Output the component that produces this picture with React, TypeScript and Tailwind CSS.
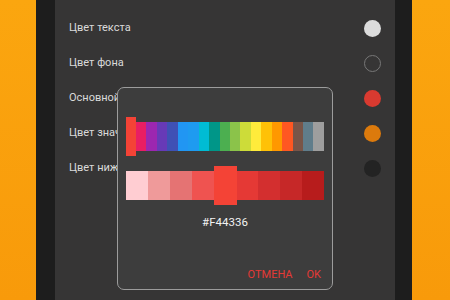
import React from 'react';

const FONT = { fontFamily: 'Roboto, "Noto Sans", sans-serif' };

const rows = [
  { label: 'Цвет текста', swatch: 'bg-[#dcdcdc]' },
  { label: 'Цвет фона', swatch: 'border border-[#777] bg-transparent' },
  { label: 'Основной цвет', swatch: 'bg-[#d93a30]' },
  { label: 'Цвет значков', swatch: 'bg-[#dc7a0c]' },
  { label: 'Цвет нижней панели', swatch: 'bg-[#232323]' },
];

const hues = [
  '#F44336', '#E91E63', '#9C27B0', '#673AB7', '#3F51B5', '#2196F3', '#1E9BF0',
  '#00BCD4', '#009688', '#4CAF50', '#8BC34A', '#CDDC39', '#FFEB3B', '#FFC107',
  '#FF9800', '#FF5722', '#795548', '#607D8B', '#9E9E9E',
];

const shades = [
  '#FFCDD2', '#EF9A9A', '#E57373', '#EF5350', '#F44336',
  '#E53935', '#D32F2F', '#C62828', '#B71C1C',
];

const ColorDialog = () => {
  return (
    <div className="absolute left-[62px] top-[87px] w-[216px] h-[203px] rounded-[7px] border-[1.5px] border-[#9c9c9c] bg-[#3d3d3d] flex flex-col">
      {/* оттенки */}
      <div className="mt-[28px] ml-[8px] mr-[8px] flex items-center h-[40px]">
        {hues.map((c, i) => (
          <div
            key={c + i}
            className={i === 0 ? 'w-[10px] h-[39px]' : 'flex-1 h-[29px]'}
            style={{ backgroundColor: c }}
          />
        ))}
      </div>
      {/* насыщенность */}
      <div className="mt-[10px] ml-[8px] mr-[8px] flex items-center h-[39px]">
        {shades.map((c, i) => (
          <div
            key={c}
            className={i === 4 ? 'w-[23px] h-[39px]' : 'flex-1 h-[29px]'}
            style={{ backgroundColor: c }}
          />
        ))}
      </div>
      <div className="mt-[10px] text-center text-[11.5px] text-[#f2f2f2] leading-[14px]">#F44336</div>
      <div className="mt-auto mb-[7px] flex justify-end items-center gap-[14px] pr-[11px] h-[14px] text-[11px] text-[#e53935] leading-[14px]">
        <span>ОТМЕНА</span>
        <span>OK</span>
      </div>
    </div>
  );
};

const App = () => {
  return (
    <div className="w-[450px] h-[300px] flex overflow-hidden" style={FONT}>
      <div className="w-[36px] bg-gradient-to-b from-[#fba60f] to-[#f89a0a]" />
      <div className="w-[19px] bg-[#1d1d1d]" />
      <div className="relative w-[340px] bg-[#363535] pt-[11px]">
        {rows.map((r) => (
          <div key={r.label} className="h-[35px] flex items-center justify-between pl-[14px] pr-[14px]">
            <span className="text-[11px] text-[#dadada]">{r.label}</span>
            <span className={`w-[17px] h-[17px] rounded-full ${r.swatch}`} />
          </div>
        ))}
        <ColorDialog />
      </div>
      <div className="w-[17px] bg-[#1d1d1d]" />
      <div className="flex-1 bg-gradient-to-b from-[#fba60f] to-[#f89a0a]" />
    </div>
  );
};

export default App;
